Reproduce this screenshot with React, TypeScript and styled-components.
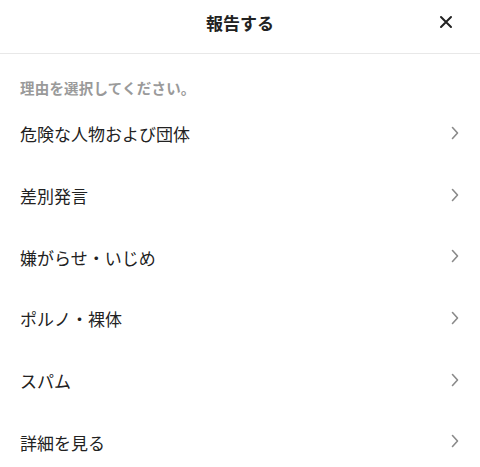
import styled, { createGlobalStyle } from "styled-components";

const GlobalStyle = createGlobalStyle`
    html, body {
        margin: 0;
        padding: 0;
        background: #fff;
    }
    body {
        font-family: "Noto Sans CJK JP", "Noto Sans", sans-serif;
        color: #222;
    }
`

const Sheet = styled.div`
    width: 480px;
    height: 467px;
    overflow: hidden;
    background: #fff;
    display: flex;
    flex-direction: column;
`

const Header = styled.header`
    position: relative;
    height: 53px;
    border-bottom: 1px solid #e8e8e8;
    display: flex;
    align-items: center;
    justify-content: center;
    flex-shrink: 0;
`

const Title = styled.h1`
    margin: 0;
    font-size: 17px;
    font-weight: 700;
    line-height: 1;
    color: #222;
    margin-top: -9px;
`

const CloseButton = styled.button`
    position: absolute;
    right: 24px;
    top: 12px;
    width: 20px;
    height: 20px;
    padding: 0;
    border: none;
    background: transparent;
    display: flex;
    align-items: center;
    justify-content: center;
    cursor: pointer;
`

const Prompt = styled.p`
    margin: 0;
    padding: 24px 20px 5px;
    font-size: 14.5px;
    letter-spacing: 0.2px;
    line-height: 20px;
    font-weight: 600;
    color: #9a9a9a;
`

const List = styled.ul`
    list-style: none;
    margin: 0;
    padding: 0;
`

const Row = styled.li`
    height: 61.7px;
    display: flex;
    align-items: center;
    justify-content: space-between;
    padding: 0 20px;
    box-sizing: border-box;
    cursor: pointer;
`

const Label = styled.span`
    font-size: 17px;
    line-height: 1;
    color: #222;
`

const Chevron = styled.svg`
    width: 8px;
    height: 14px;
    margin-right: 1px;
    margin-top: -2px;
`

const reasons = [
    "危険な人物および団体",
    "差別発言",
    "嫌がらせ・いじめ",
    "ポルノ・裸体",
    "スパム",
    "詳細を見る",
]

export default function App() {
    return (
        <>
            <GlobalStyle />
            <Sheet>
                <Header>
                    <Title>報告する</Title>
                    <CloseButton aria-label="閉じる">
                        <svg width="14" height="14" viewBox="0 0 14 14">
                            <path d="M2 2 L12 12 M12 2 L2 12" stroke="#222" strokeWidth="2" strokeLinecap="round" />
                        </svg>
                    </CloseButton>
                </Header>
                <Prompt>理由を選択してください。</Prompt>
                <List>
                    {reasons.map((r) => (
                        <Row key={r}>
                            <Label>{r}</Label>
                            <Chevron viewBox="0 0 8 14">
                                <path d="M1.5 1.5 L6.5 7 L1.5 12.5" fill="none" stroke="#8a8a8a" strokeWidth="1.6" strokeLinecap="round" strokeLinejoin="round" />
                            </Chevron>
                        </Row>
                    ))}
                </List>
            </Sheet>
        </>
    )
}
